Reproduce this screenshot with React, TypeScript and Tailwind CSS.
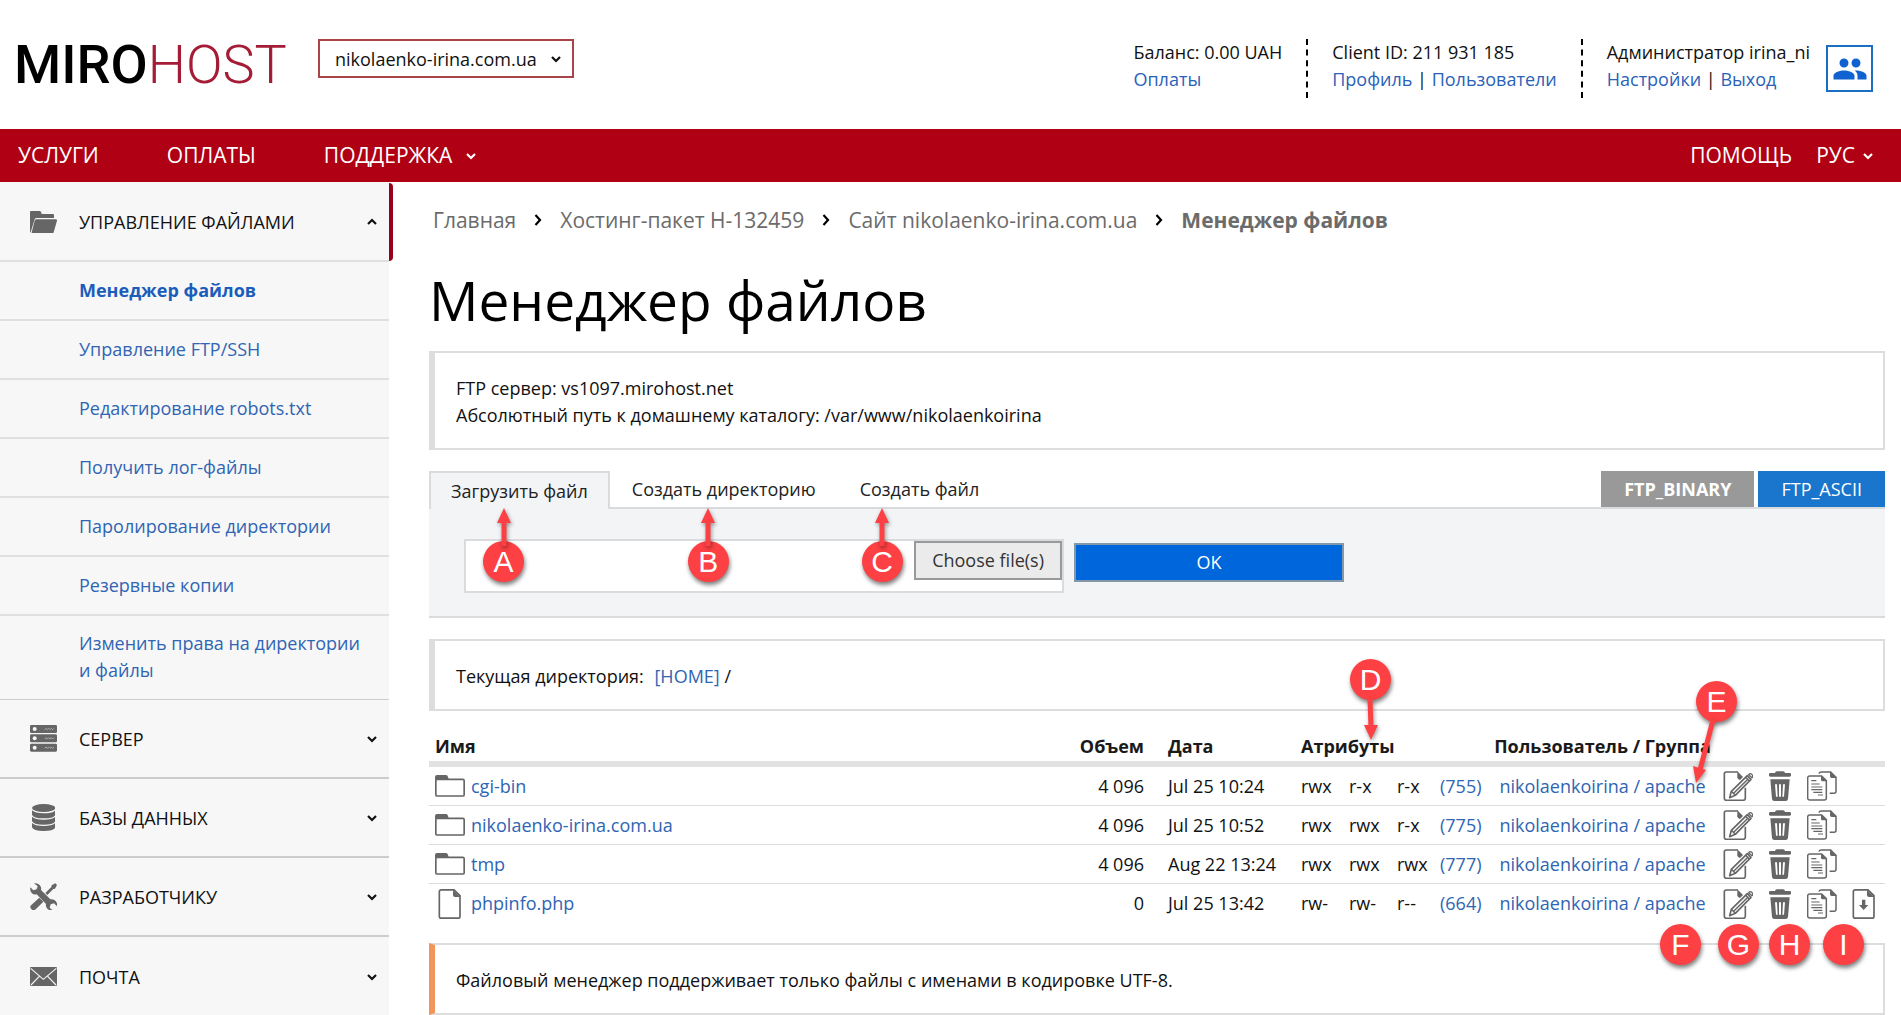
import { useState } from "react";
import clsx from "clsx";
import { MdPeople } from "react-icons/md";

interface IChevron {
  className?: string;
}

const Chevron: React.FC<IChevron> = ({ className }) => (
  <svg
    viewBox="0 0 10 8"
    className={clsx("h-2 w-2.5 shrink-0", className)}
    fill="none"
    stroke="currentColor"
    strokeWidth="2.2"
    aria-hidden="true"
  >
    <path d="M1 2l4 4 4-4" />
  </svg>
);

const CrumbArrow = () => (
  <svg
    viewBox="0 0 8 14"
    className="h-3.5 w-2 shrink-0 text-black"
    fill="none"
    stroke="currentColor"
    strokeWidth="2.2"
    aria-hidden="true"
  >
    <path d="M1.5 2l4.5 5-4.5 5" />
  </svg>
);

const FolderOpenIcon = () => (
  <svg viewBox="0 0 81 68" className="w-[27px]" fill="currentColor">
    <path d="M0 3q0-3 3-3h26q3 0 4 3l2 6h34q3 0 3 3v9H19q-4 0-5 4L2 64H0z" />
    <path d="M19 25h58q5 0 4 4L71 64q-1 4-5 4H4l10-39q1-4 5-4z" />
  </svg>
);

const ServerIcon = () => (
  <svg viewBox="0 0 81 80" className="w-[27px]">
    {[0, 28, 56].map((y) => (
      <g key={y}>
        <rect y={y} width="81" height="24" rx="4" fill="currentColor" />
        <circle cx="14" cy={y + 12} r="6" fill="#f7f7f7" />
        <path
          d={`M44 ${y + 14}l4-4 4 4 4-4 4 4 4-4 4 4 4-4`}
          fill="none"
          stroke="#cfcfcf"
          strokeWidth="2"
        />
      </g>
    ))}
  </svg>
);

const DatabaseIcon = () => (
  <svg viewBox="0 0 70 81" className="h-[27px]" fill="currentColor">
    <ellipse cx="35" cy="12" rx="35" ry="12" />
    {[0, 19, 38].map((y) => (
      <path
        key={y}
        d={`M0 ${y + 19}q9 9 35 9t35-9v13q-3 11-35 11T0 ${y + 32}z`}
      />
    ))}
  </svg>
);

const ToolsIcon = () => (
  <svg viewBox="0 0 81 81" className="w-[27px]" fill="currentColor">
    <path d="M46 30L64 12l1-5 11-6 5 5-6 11-5 1-18 18z" />
    <path d="M28 44l12 12-22 22q-4 4-9 4-9-4-8-11 0-3 3-5z" />
    <path d="M12 1q10-2 17 5 6 6 4 15l28 28q10-2 16 5 6 7 4 16l-9-9-10 3-3 10 9 8q-10 2-16-5-6-6-4-14L20 34q-9 2-15-4-6-7-4-17l9 9 10-3 3-9z" />
  </svg>
);

const MailIcon = () => (
  <svg viewBox="0 0 81 57" className="w-[27px]">
    <rect width="81" height="57" rx="3" fill="currentColor" />
    <path
      d="M2 4l38 33L79 4M3 54l25-26M78 54L53 28"
      fill="none"
      stroke="#f7f7f7"
      strokeWidth="3.5"
    />
  </svg>
);

const FolderIcon = () => (
  <svg viewBox="0 0 90 66" className="w-[30px] text-[#666]" fill="none">
    <rect
      x="2.5"
      y="13"
      width="85"
      height="50"
      rx="4"
      stroke="currentColor"
      strokeWidth="5"
    />
    <path d="M0 14V6q0-6 6-6h27q5 0 6 6l2 6z" fill="currentColor" />
  </svg>
);

const SheetShape = () => (
  <>
    <path
      d="M48 2.5H10q-6 0-6 6v73q0 6 6 6h50q6 0 6-6V20z"
      fill="none"
      stroke="currentColor"
      strokeWidth="5"
    />
    <path d="M45 2v16q0 6 6 6h16z" fill="currentColor" />
  </>
);

const FileIcon = () => (
  <svg viewBox="0 0 70 90" className="h-[30px] text-[#666]">
    <SheetShape />
  </svg>
);

const DownloadIcon = () => (
  <svg viewBox="0 0 70 90" className="h-[30px]">
    <SheetShape />
    <path d="M30 32h10v16h9L35 63 21 48h9z" fill="currentColor" />
  </svg>
);

const EditIcon = () => (
  <svg viewBox="0 0 90 90" className="w-[30px]" fill="none">
    <path
      d="M45 3H10q-6 0-6 6v73q0 6 6 6h50q7 0 7-6V50"
      stroke="currentColor"
      strokeWidth="5"
    />
    <path d="M43 1l17 17-9 9q-8-1-8-8z" fill="currentColor" />
    <path
      d="M20 80l5-19 48-47 11 11-47 48z"
      fill="#fff"
      stroke="currentColor"
      strokeWidth="5"
      strokeLinejoin="round"
    />
    <path
      d="M32 67l44-44M25 61l12 12M68 19l11 11"
      stroke="currentColor"
      strokeWidth="4.5"
    />
    <path d="M77 11q5-6 10 0t0 9z" stroke="currentColor" strokeWidth="4" />
  </svg>
);

const TrashIcon = () => (
  <svg viewBox="0 0 66 90" className="h-[30px]" fill="currentColor">
    <path d="M18 7q0-6 6-6h18q6 0 6 6z" />
    <rect y="6" width="66" height="11" rx="4" />
    <path
      fillRule="evenodd"
      d="M4 25h58l-5 59q-1 6-7 6H16q-6 0-7-6zM18 40l3 37h5l-2-37zM30 40v37h6V40zM42 40l-2 37h5l3-37z"
    />
  </svg>
);

const CopyIcon = () => (
  <svg viewBox="0 0 90 90" className="w-[30px]" fill="none">
    <path
      d="M44 15H8q-6 0-6 6v60q0 6 6 6h44q6 0 6-6V29zM36 8q1-5 7-5h28l16 16v42q0 6-6 6H68"
      stroke="currentColor"
      strokeWidth="4.5"
    />
    <path d="M42 14v12q0 5 5 5h12zM69 2v14q0 5 5 5h15z" fill="currentColor" />
    <path
      d="M13 29h15M13 39h25M13 48h33M13 56h33M19 64h27M33 72h15"
      stroke="currentColor"
      strokeWidth="3.5"
    />
  </svg>
);

interface IMarker {
  letter: string;
  className: string;
  arrow?: string;
  head?: string;
}

// Round help marker with an optional arrow; the drawing is centred on the disc
const Marker: React.FC<IMarker> = ({ letter, className, arrow, head }) => (
  <span
    className={clsx(
      "pointer-events-none absolute z-10 flex size-[41px] items-center justify-center",
      className,
    )}
  >
    <span className="absolute inset-0 rounded-full bg-[#fc4043] shadow-[1px_3px_4px_rgba(0,0,0,0.5)]" />
    {arrow && (
      <svg
        viewBox="-90 -90 180 180"
        className="absolute size-[180px] max-w-none drop-shadow-[1px_2px_2px_rgba(0,0,0,0.4)]"
      >
        <path d={arrow} stroke="#fc4043" strokeWidth="5" />
        <path d={head} fill="#fc4043" />
      </svg>
    )}
    <span className="relative font-['Liberation_Sans'] text-[30px] leading-none font-normal text-white">
      {letter}
    </span>
  </span>
);

const UP_ARROW = "M0-16V-40";
const UP_HEAD = "M0-54l7 15H-7z";

const fileLinks = [
  "Менеджер файлов",
  "Управление FTP/SSH",
  "Редактирование robots.txt",
  "Получить лог-файлы",
  "Паролирование директории",
  "Резервные копии",
  "Изменить права на директории и файлы",
];

const sections = [
  { title: "СЕРВЕР", icon: <ServerIcon /> },
  { title: "БАЗЫ ДАННЫХ", icon: <DatabaseIcon /> },
  { title: "РАЗРАБОТЧИКУ", icon: <ToolsIcon /> },
  { title: "ПОЧТА", icon: <MailIcon /> },
];

const tabs = [
  { title: "Загрузить файл", letter: "A" },
  { title: "Создать директорию", letter: "B" },
  { title: "Создать файл", letter: "C" },
];

const files = [
  { name: "cgi-bin", dir: true, size: "4 096", date: "Jul 25 10:24", attrs: ["rwx", "r-x", "r-x"], mode: "(755)" },
  { name: "nikolaenko-irina.com.ua", dir: true, size: "4 096", date: "Jul 25 10:52", attrs: ["rwx", "rwx", "r-x"], mode: "(775)" },
  { name: "tmp", dir: true, size: "4 096", date: "Aug 22 13:24", attrs: ["rwx", "rwx", "rwx"], mode: "(777)" },
  { name: "phpinfo.php", dir: false, size: "0", date: "Jul 25 13:42", attrs: ["rw-", "rw-", "r--"], mode: "(664)" },
];

const Header = () => (
  <header>
    <div className="flex h-[129px] justify-between pr-7 pl-[14px]">
      <div className="flex gap-[30px] pt-[39px]">
        <a
          href="#"
          className="w-[274px] font-['Roboto'] text-[54px] leading-[52px] whitespace-nowrap"
        >
          <span className="font-medium text-black">MIRO</span>
          <span className="font-light text-[#a51c36]">HOST</span>
        </a>
        <span className="relative h-[39px]">
          <select
            aria-label="Сайт"
            className="h-full w-[256px] appearance-none border-2 border-[#a94448] bg-white pl-[15px]"
          >
            <option>nikolaenko-irina.com.ua</option>
          </select>
          <Chevron className="pointer-events-none absolute top-4 right-[13px]" />
        </span>
      </div>

      <div className="flex pt-[39px] leading-[27px]">
        <div className="pr-6">
          <p>Баланс: 0.00 UAH</p>
          <a href="#" className="text-[#2a62b8]">
            Оплаты
          </a>
        </div>
        <div className="h-[59px] border-l-2 border-dashed border-black px-6">
          <p>Client ID: 211 931 185</p>
          <a href="#" className="text-[#2a62b8]">
            Профиль
          </a>
          {" | "}
          <a href="#" className="text-[#2a62b8]">
            Пользователи
          </a>
        </div>
        <div className="h-[59px] border-l-2 border-dashed border-black pr-4 pl-6">
          <p>Администратор irina_ni</p>
          <a href="#" className="text-[#2a62b8]">
            Настройки
          </a>
          {" | "}
          <a href="#" className="text-[#2a62b8]">
            Выход
          </a>
        </div>
        <button
          aria-label="Пользователи"
          className="mt-1.5 flex size-[47px] items-center justify-center border-2 border-[#1a6fc0] text-[#0f62cf]"
        >
          <MdPeople size={36} />
        </button>
      </div>
    </div>

    <nav className="flex h-[53px] items-center justify-between bg-[#b00014] pr-7 pl-[18px] text-[21px] text-white">
      <div className="flex gap-[68px]">
        <a href="#">УСЛУГИ</a>
        <a href="#">ОПЛАТЫ</a>
        <button className="flex items-center gap-3.5">
          ПОДДЕРЖКА
          <Chevron />
        </button>
      </div>
      <div className="flex gap-6">
        <a href="#">ПОМОЩЬ</a>
        <button className="flex items-center gap-2">
          РУС
          <Chevron />
        </button>
      </div>
    </nav>
  </header>
);

const Sidebar = () => (
  <aside className="w-[389px] shrink-0 bg-[#f7f7f7]">
    <button className="relative flex h-20 w-full items-center border-b-2 border-[#e0e0e0] pt-0.5 pr-3 pl-[30px] text-left">
      <span className="flex w-[49px] text-[#666]">
        <FolderOpenIcon />
      </span>
      <span className="flex-1">УПРАВЛЕНИЕ ФАЙЛАМИ</span>
      <Chevron className="rotate-180" />
      <span className="absolute top-px left-full h-[78px] w-1 rounded-r bg-[#98001c]" />
    </button>
    <ul>
      {fileLinks.map((title, i) => (
        <li
          key={title}
          className="border-b-2 border-[#e0e0e0] py-[15px] pr-6 pl-[79px] leading-[27px] last:border-b last:border-[#ccc] last:pt-[14px]"
        >
          <a
            href="#"
            className={i === 0 ? "font-bold text-[#1a5dbb]" : "text-[#2f65b3]"}
          >
            {title}
          </a>
        </li>
      ))}
    </ul>
    {sections.map(({ title, icon }) => (
      <button
        key={title}
        className="flex h-[79px] w-full items-center border-b-2 border-[#ccc] pr-3 pl-[30px] text-left last:border-b-0"
      >
        <span className="flex w-[27px] justify-center text-[#666]">{icon}</span>
        <span className="flex-1 pl-[22px]">{title}</span>
        <Chevron />
      </button>
    ))}
  </aside>
);

const Breadcrumbs = () => (
  <nav className="flex items-center gap-[18px] pl-1 text-[21px] leading-7 text-[#6b6b6b]">
    <a href="#">Главная</a>
    <CrumbArrow />
    <a href="#">Хостинг-пакет H-132459</a>
    <CrumbArrow />
    <a href="#">Сайт nikolaenko-irina.com.ua</a>
    <CrumbArrow />
    <b>Менеджер файлов</b>
  </nav>
);

const Upload = () => {
  const [active, setActive] = useState(0);

  return (
    <section className="mt-[21px]">
      <div className="flex justify-between border-b-2 border-[#d9dbdd]">
        <div className="flex" role="tablist">
          {tabs.map(({ title, letter }, i) => (
            <button
              key={title}
              role="tab"
              aria-selected={active === i}
              onClick={() => setActive(i)}
              className={clsx(
                "relative text-[#222]",
                active === i
                  ? "-mb-0.5 border-2 border-b-0 border-[#d9dbdd] bg-[#f3f4f6] px-5"
                  : "px-[22px]",
              )}
            >
              {title}
              <Marker
                letter={letter}
                arrow={UP_ARROW}
                head={UP_HEAD}
                className={clsx(
                  i === 0 && "top-[68px] left-[52px]",
                  i === 1 && "top-[70px] left-[78px]",
                  i === 2 && "top-[70px] left-6",
                )}
              />
            </button>
          ))}
        </div>
        <div className="flex h-9 gap-1 text-white">
          <button className="bg-[#999] px-[23px] font-bold">FTP_BINARY</button>
          <button className="bg-[#1976cc] px-[23px]">FTP_ASCII</button>
        </div>
      </div>
      <form className="flex items-start gap-2.5 border-b-2 border-[#d9dbdd] bg-[#f3f4f6] pt-[30px] pb-[23px] pl-[35px]">
        <div className="flex h-[54px] w-[600px] items-start border-2 border-[#d9dbdd] bg-white">
          <input
            type="text"
            readOnly
            aria-label="Файл"
            className="h-full min-w-0 flex-1 outline-none"
          />
          <button
            type="button"
            className="h-[39px] border-2 border-[#999] bg-[#ebebeb] px-4 text-[#333]"
          >
            Choose file(s)
          </button>
        </div>
        <button
          type="button"
          className="mt-1 h-[39px] w-[270px] border-2 border-[#8297a8] bg-[#0066db] text-white"
        >
          OK
        </button>
      </form>
    </section>
  );
};

const FileTable = () => (
  <table className="mt-5 w-full table-fixed border-separate border-spacing-0">
    <colgroup>
      <col />
      <col className="w-[120px]" />
      <col className="w-[133px]" />
      <col className="w-[64px]" />
      <col className="w-[48px]" />
      <col className="w-[43px]" />
      <col className="w-[48px]" />
      <col className="w-[229px]" />
      <col className="w-[42px]" />
      <col className="w-[42px]" />
      <col className="w-[42px]" />
      <col className="w-[42px]" />
    </colgroup>
    <thead>
      <tr className="h-9 text-left text-[#1a1a1a] *:border-b-6 *:border-[#e2e2e2] *:p-0 *:leading-[27px]">
        <th>
          <span className="pl-1.5">Имя</span>
        </th>
        <th className="text-right">
          <span className="pr-2">Объем</span>
        </th>
        <th>
          <span className="pl-4">Дата</span>
        </th>
        <th colSpan={4} className="relative">
          <span className="pl-4">Атрибуты</span>
          <Marker
            letter="D"
            arrow="M-1 19L0 48"
            head="M0 60l-7-15H7z"
            className="-top-[72px] left-[65px]"
          />
        </th>
        <th className="relative text-center">
          Пользователь / Группа
          <Marker
            letter="E"
            arrow="M-4 18L-17 68"
            head="M-21 81l-3-17 13 4z"
            className="-top-[50px] right-[-20px]"
          />
        </th>
        <th colSpan={4} aria-label="Действия" />
      </tr>
    </thead>
    <tbody>
      {files.map(({ name, dir, size, date, attrs, mode }) => (
        <tr
          key={name}
          className="group h-[39px] *:border-b *:border-[#ddd] *:p-0 last:*:border-b-0"
        >
          <td>
            <a href="#" className="flex items-center pl-1.5 text-[#2f65b3]">
              <span className="mr-1.5 flex w-[30px] justify-center">
                {dir ? <FolderIcon /> : <FileIcon />}
              </span>
              {name}
            </a>
          </td>
          <td className="text-right">
            <span className="pr-2">{size}</span>
          </td>
          <td>
            <span className="pl-4">{date}</span>
          </td>
          <td>
            <span className="pl-4">{attrs[0]}</span>
          </td>
          <td>{attrs[1]}</td>
          <td>{attrs[2]}</td>
          <td>
            <a href="#" className="text-[#2f65b3]">
              {mode}
            </a>
          </td>
          <td className="relative text-center text-[#2f65b3]">
            <a href="#">nikolaenkoirina</a> / <a href="#">apache</a>
            {!dir && <Marker letter="F" className="top-[40px] right-[16px]" />}
          </td>
          <td className="relative">
            <button
              aria-label="Редактировать"
              className="flex w-full justify-center text-[#666]"
            >
              <EditIcon />
            </button>
            {!dir && <Marker letter="G" className="top-[40px] left-px" />}
          </td>
          <td className="relative">
            <button
              aria-label="Удалить"
              className="flex w-full justify-center text-[#666]"
            >
              <TrashIcon />
            </button>
            {!dir && <Marker letter="H" className="top-[40px] left-[10px]" />}
          </td>
          <td className="relative">
            <button
              aria-label="Копировать"
              className="flex w-full justify-center text-[#666]"
            >
              <CopyIcon />
            </button>
            {!dir && <Marker letter="I" className="top-[40px] left-[22px]" />}
          </td>
          <td>
            {!dir && (
              <button
                aria-label="Скачать"
                className="flex w-full justify-center text-[#666]"
              >
                <DownloadIcon />
              </button>
            )}
          </td>
        </tr>
      ))}
    </tbody>
  </table>
);

export default function App() {
  return (
    <div className="bg-white font-['Open_Sans',sans-serif] text-lg text-[#111]">
      <Header />
      <div className="flex">
        <Sidebar />
        <main className="min-w-0 flex-1 pt-6 pr-4 pl-10 leading-[27px]">
          <Breadcrumbs />
          <h1 className="mt-[30px] text-[55px] leading-[72px] text-black">
            Менеджер файлов
          </h1>
          <div className="mt-[15px] border-2 border-l-6 border-[#ddd] px-[21px] pt-[22px] pb-[19px]">
            <p>FTP сервер: vs1097.mirohost.net</p>
            <p>
              Абсолютный путь к домашнему каталогу: /var/www/nikolaenkoirina
            </p>
          </div>
          <Upload />
          <div className="mt-[21px] border-2 border-l-6 border-[#ddd] px-[21px] pt-[22px] pb-[19px]">
            Текущая директория:{" "}
            <a href="#" className="ml-1.5 text-[#2f65b3]">
              [HOME]
            </a>{" "}
            /
          </div>
          <FileTable />
          <div className="mt-5 border-2 border-l-6 border-[#ddd] border-l-[#f2955a] px-[21px] pt-[22px] pb-[19px]">
            Файловый менеджер поддерживает только файлы с именами в кодировке
            UTF-8.
          </div>
        </main>
      </div>
    </div>
  );
}
